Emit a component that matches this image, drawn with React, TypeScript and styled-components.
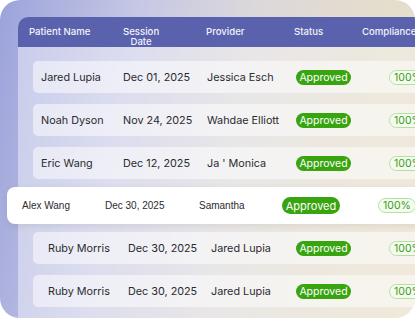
import React from "react";
import styled, { createGlobalStyle } from "styled-components";

const Global = createGlobalStyle`
  html, body { margin: 0; padding: 0; background: #ffffff; }
  body { font-family: Inter, "Noto Sans", sans-serif; }
  * { box-sizing: border-box; }
`;

const Card = styled.div`
  width: 415px;
  height: 318px;
  border-radius: 20px;
  overflow: hidden;
  background: linear-gradient(100deg, #9ca3db 0%, #c6c8e4 30%, #dcd8da 55%, #e4ddcd 80%, #e9dfcb 100%);
  padding: 17px 0 0 18px;
`;

const Panel = styled.div`
  width: 430px;
  height: 301px;
  border-top-left-radius: 10px;
  background: linear-gradient(100deg, rgba(255, 255, 255, 0.42), rgba(255, 255, 255, 0.3));
  display: flex;
  flex-direction: column;
`;

const Header = styled.div`
  height: 30px;
  flex: none;
  background: #5a62ad;
  border-top-left-radius: 10px;
  display: grid;
  grid-template-columns: 94px 83px 88px 68px 1fr;
  align-items: start;
  padding: 10px 0 0 11px;
  color: #f2f3fb;
  font-size: 9.6px;
  font-weight: 500;
  line-height: 10px;
`;

const HeadCell = styled.div<{ $center?: boolean }>`
  white-space: nowrap;
  ${(p) => (p.$center ? "text-align: center; width: fit-content;" : "")}
`;

const Rows = styled.div`
  display: flex;
  flex-direction: column;
  gap: 11px;
  padding-top: 14px;
`;

const Row = styled.div<{ $cols: string; $pad: number }>`
  margin-left: 15px;
  height: 32px;
  border-radius: 5px;
  background: rgba(255, 255, 255, 0.5);
  display: grid;
  grid-template-columns: ${(p) => p.$cols};
  align-items: center;
  padding-left: ${(p) => p.$pad}px;
  font-size: 10.8px;
  color: #2b2b2e;
  font-family: Inter, "Noto Sans", sans-serif;
`;

const FeatureRow = styled.div`
  margin: -3px 0 -3px -11px;
  height: 37px;
  border-radius: 8px;
  background: #ffffff;
  box-shadow: 0 2px 6px rgba(90, 80, 60, 0.12);
  display: grid;
  grid-template-columns: 83px 94px 83px 96px 1fr;
  align-items: center;
  padding-left: 15px;
  font-size: 10px;
  color: #2b2b2e;
  font-family: "Liberation Sans", Arial, sans-serif;
`;

const Cell = styled.div`
  white-space: nowrap;
`;

const StatusPill = styled.span<{ $big?: boolean }>`
  display: inline-flex;
  align-items: center;
  justify-content: center;
  width: ${(p) => (p.$big ? 58 : 55)}px;
  height: ${(p) => (p.$big ? 17 : 15)}px;
  border-radius: 9px;
  background: #38a40f;
  color: #ffffff;
  font-size: ${(p) => (p.$big ? 11 : 10.5)}px;
  font-family: Inter, "Noto Sans", sans-serif;
  font-weight: 400;
`;

const CompPill = styled.span`
  display: inline-flex;
  align-items: center;
  justify-content: center;
  width: 38px;
  height: 15px;
  border-radius: 8px;
  border: 1px solid #b3e0a2;
  background: #f4fcef;
  color: #3d9a23;
  font-size: 10.5px;
  font-family: Inter, "Noto Sans", sans-serif;
`;

type R = { name: string; date: string; provider: string };

const top: R[] = [
  { name: "Jared Lupia", date: "Dec 01, 2025", provider: "Jessica Esch" },
  { name: "Noah Dyson", date: "Nov 24, 2025", provider: "Wahdae Elliott" },
  { name: "Eric Wang", date: "Dec 12, 2025", provider: "Ja ' Monica" },
];

const bottom: R[] = [
  { name: "Ruby Morris", date: "Dec 30, 2025", provider: "Jared Lupia" },
  { name: "Ruby Morris", date: "Dec 30, 2025", provider: "Jared Lupia" },
];

const topCols = "82px 84px 89px 93px 1fr";
const bottomCols = "80px 83px 85px 93px 1fr";

function DataRow({ r, cols, pad }: { r: R; cols: string; pad: number }) {
  return (
    <Row $cols={cols} $pad={pad}>
      <Cell>{r.name}</Cell>
      <Cell>{r.date}</Cell>
      <Cell>{r.provider}</Cell>
      <Cell>
        <StatusPill>Approved</StatusPill>
      </Cell>
      <Cell>
        <CompPill>100%</CompPill>
      </Cell>
    </Row>
  );
}

export default function App() {
  return (
    <>
      <Global />
      <Card>
        <Panel>
          <Header>
            <HeadCell>Patient Name</HeadCell>
            <HeadCell $center>
              Session
              <br />
              Date
            </HeadCell>
            <HeadCell>Provider</HeadCell>
            <HeadCell>Status</HeadCell>
            <HeadCell>Compliance</HeadCell>
          </Header>
          <Rows>
            {top.map((r, i) => (
              <DataRow key={i} r={r} cols={topCols} pad={8} />
            ))}
            <FeatureRow>
              <Cell>Alex Wang</Cell>
              <Cell>Dec 30, 2025</Cell>
              <Cell>Samantha</Cell>
              <Cell>
                <StatusPill $big>Approved</StatusPill>
              </Cell>
              <Cell>
                <CompPill>100%</CompPill>
              </Cell>
            </FeatureRow>
            {bottom.map((r, i) => (
              <DataRow key={i} r={r} cols={bottomCols} pad={15} />
            ))}
          </Rows>
        </Panel>
      </Card>
    </>
  );
}
